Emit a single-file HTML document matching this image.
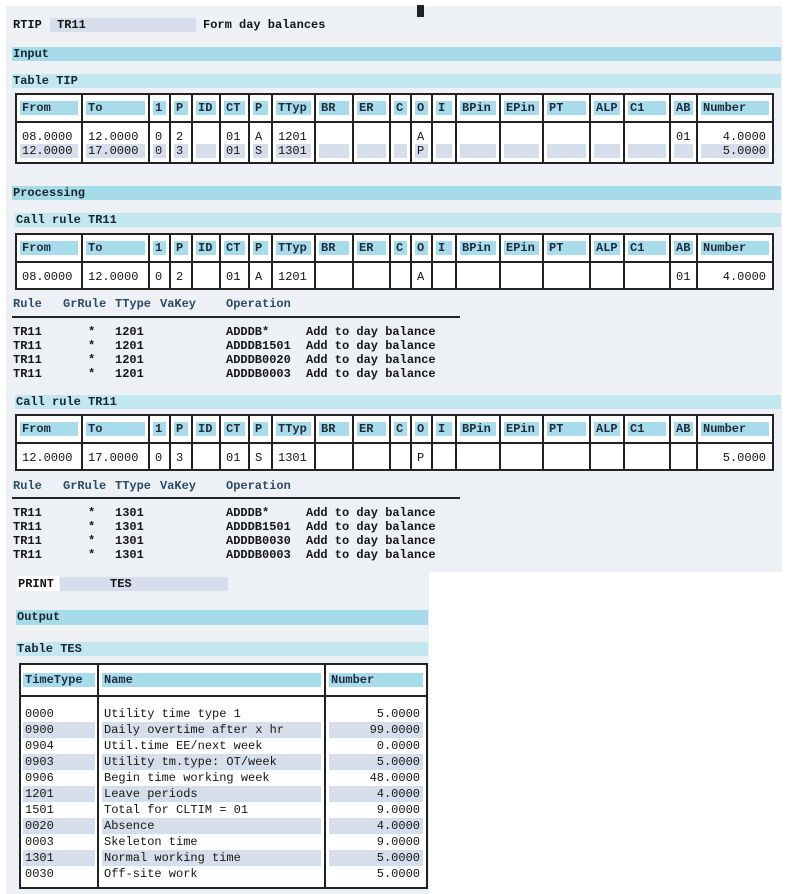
<!DOCTYPE html>
<html><head><meta charset="utf-8">
<style>
*{margin:0;padding:0;box-sizing:border-box}
body{width:788px;height:894px;background:#fff;position:relative;overflow:hidden;font-family:"Liberation Mono",monospace;font-size:12px;color:#151515}
.a{position:absolute;white-space:pre;line-height:14px}
.bar{position:absolute;height:14px;line-height:14px;padding-left:1px;background:#a6dcea;font-weight:bold;color:#1a2430}
.bar2{background:#c2e7ee}
table{position:absolute;border:2px solid #222;border-collapse:collapse;table-layout:fixed;background:#fff}
td{border-left:2px solid #222;padding:0;vertical-align:middle}
tr.hd td{border-bottom:2px solid #222;height:28px}
.c{height:14px;line-height:14px;margin:0 3px;padding-left:2px;white-space:pre;overflow:hidden}
.h{background:#a8dcec;font-weight:bold;color:#1e2c3a}
.r{background:#d6deeb}
.n{text-align:right;padding-right:3px}
.sp td{height:8px}
.sp2 td{height:5px}
.dr td{height:14px}
.rh{color:#2b4a66;font-weight:bold}
.b{font-weight:bold}
.t{height:16px;line-height:16px}
</style></head><body>
<div style="position:absolute;left:6px;top:6px;width:776px;height:566px;background:#edf0f5"></div>
<div style="position:absolute;left:6px;top:572px;width:423px;height:322px;background:#edf0f5"></div>
<div style="position:absolute;left:417px;top:5px;width:7px;height:12px;background:#222"></div>

<div class="a b" style="left:13px;top:18px">RTIP</div>
<div style="position:absolute;left:50px;top:18px;width:146px;height:14px;background:#d6deeb"></div>
<div class="a b" style="left:57px;top:18px">TR11</div>
<div class="a b" style="left:203px;top:18px">Form day balances</div>

<div class="bar" style="left:12px;top:47px;width:769px">Input</div>
<div class="bar bar2" style="left:12px;top:74px;width:769px">Table TIP</div>

<table style="left:15px;top:93px;width:757px">
<colgroup><col style="width:66px"><col style="width:67px"><col style="width:21px"><col style="width:22px"><col style="width:28px"><col style="width:29px"><col style="width:23px"><col style="width:43px"><col style="width:38px"><col style="width:37px"><col style="width:21px"><col style="width:21px"><col style="width:24px"><col style="width:44px"><col style="width:43px"><col style="width:47px"><col style="width:34px"><col style="width:46px"><col style="width:27px"><col style="width:76px"></colgroup>
<tr class="hd"><td><div class="c h">From</div></td><td><div class="c h">To</div></td><td><div class="c h">1</div></td><td><div class="c h">P</div></td><td><div class="c h">ID</div></td><td><div class="c h">CT</div></td><td><div class="c h">P</div></td><td><div class="c h">TTyp</div></td><td><div class="c h">BR</div></td><td><div class="c h">ER</div></td><td><div class="c h">C</div></td><td><div class="c h">O</div></td><td><div class="c h">I</div></td><td><div class="c h">BPin</div></td><td><div class="c h">EPin</div></td><td><div class="c h">PT</div></td><td><div class="c h">ALP</div></td><td><div class="c h">C1</div></td><td><div class="c h">AB</div></td><td><div class="c h">Number</div></td></tr>
<tr class="sp"><td></td><td></td><td></td><td></td><td></td><td></td><td></td><td></td><td></td><td></td><td></td><td></td><td></td><td></td><td></td><td></td><td></td><td></td><td></td><td></td></tr>
<tr class="dr"><td><div class="c">08.0000</div></td><td><div class="c">12.0000</div></td><td><div class="c">0</div></td><td><div class="c">2</div></td><td><div class="c"></div></td><td><div class="c">01</div></td><td><div class="c">A</div></td><td><div class="c">1201</div></td><td></td><td></td><td></td><td><div class="c">A</div></td><td></td><td></td><td></td><td></td><td></td><td></td><td><div class="c">01</div></td><td><div class="c n">4.0000</div></td></tr>
<tr class="dr"><td><div class="c r">12.0000</div></td><td><div class="c r">17.0000</div></td><td><div class="c r">0</div></td><td><div class="c r">3</div></td><td><div class="c r"></div></td><td><div class="c r">01</div></td><td><div class="c r">S</div></td><td><div class="c r">1301</div></td><td><div class="c r"></div></td><td><div class="c r"></div></td><td><div class="c r"></div></td><td><div class="c r">P</div></td><td><div class="c r"></div></td><td><div class="c r"></div></td><td><div class="c r"></div></td><td><div class="c r"></div></td><td><div class="c r"></div></td><td><div class="c r"></div></td><td><div class="c r"></div></td><td><div class="c r n">5.0000</div></td></tr>
<tr class="sp2"><td></td><td></td><td></td><td></td><td></td><td></td><td></td><td></td><td></td><td></td><td></td><td></td><td></td><td></td><td></td><td></td><td></td><td></td><td></td><td></td></tr>
</table>

<div class="bar" style="left:12px;top:186px;width:769px">Processing</div>
<div class="bar bar2" style="left:15px;top:213px;width:766px"> Call rule TR11</div>

<table style="left:15px;top:233px;width:757px">
<colgroup><col style="width:66px"><col style="width:67px"><col style="width:21px"><col style="width:22px"><col style="width:28px"><col style="width:29px"><col style="width:23px"><col style="width:43px"><col style="width:38px"><col style="width:37px"><col style="width:21px"><col style="width:21px"><col style="width:24px"><col style="width:44px"><col style="width:43px"><col style="width:47px"><col style="width:34px"><col style="width:46px"><col style="width:27px"><col style="width:76px"></colgroup>
<tr class="hd"><td><div class="c h">From</div></td><td><div class="c h">To</div></td><td><div class="c h">1</div></td><td><div class="c h">P</div></td><td><div class="c h">ID</div></td><td><div class="c h">CT</div></td><td><div class="c h">P</div></td><td><div class="c h">TTyp</div></td><td><div class="c h">BR</div></td><td><div class="c h">ER</div></td><td><div class="c h">C</div></td><td><div class="c h">O</div></td><td><div class="c h">I</div></td><td><div class="c h">BPin</div></td><td><div class="c h">EPin</div></td><td><div class="c h">PT</div></td><td><div class="c h">ALP</div></td><td><div class="c h">C1</div></td><td><div class="c h">AB</div></td><td><div class="c h">Number</div></td></tr>
<tr class="sp"><td></td><td></td><td></td><td></td><td></td><td></td><td></td><td></td><td></td><td></td><td></td><td></td><td></td><td></td><td></td><td></td><td></td><td></td><td></td><td></td></tr>
<tr class="dr"><td><div class="c">08.0000</div></td><td><div class="c">12.0000</div></td><td><div class="c">0</div></td><td><div class="c">2</div></td><td></td><td><div class="c">01</div></td><td><div class="c">A</div></td><td><div class="c">1201</div></td><td></td><td></td><td></td><td><div class="c">A</div></td><td></td><td></td><td></td><td></td><td></td><td></td><td><div class="c">01</div></td><td><div class="c n">4.0000</div></td></tr>
<tr class="sp2"><td></td><td></td><td></td><td></td><td></td><td></td><td></td><td></td><td></td><td></td><td></td><td></td><td></td><td></td><td></td><td></td><td></td><td></td><td></td><td></td></tr>
</table>

<div class="a rh" style="left:13px;top:297px">Rule</div>
<div class="a rh" style="left:63px;top:297px">GrRule</div>
<div class="a rh" style="left:115px;top:297px">TType</div>
<div class="a rh" style="left:160px;top:297px">VaKey</div>
<div class="a rh" style="left:226px;top:297px">Operation</div>
<div style="position:absolute;left:12px;top:316px;width:448px;height:2px;background:#222"></div>
<div class="a b" style="left:13px;top:325px">TR11
TR11
TR11
TR11</div>
<div class="a b" style="left:88px;top:325px">*
*
*
*</div>
<div class="a b" style="left:115px;top:325px">1201
1201
1201
1201</div>
<div class="a b" style="left:226px;top:325px">ADDDB*
ADDDB1501
ADDDB0020
ADDDB0003</div>
<div class="a b" style="left:306px;top:325px">Add to day balance
Add to day balance
Add to day balance
Add to day balance</div>

<div class="bar bar2" style="left:15px;top:395px;width:766px"> Call rule TR11</div>

<table style="left:15px;top:414px;width:757px">
<colgroup><col style="width:66px"><col style="width:67px"><col style="width:21px"><col style="width:22px"><col style="width:28px"><col style="width:29px"><col style="width:23px"><col style="width:43px"><col style="width:38px"><col style="width:37px"><col style="width:21px"><col style="width:21px"><col style="width:24px"><col style="width:44px"><col style="width:43px"><col style="width:47px"><col style="width:34px"><col style="width:46px"><col style="width:27px"><col style="width:76px"></colgroup>
<tr class="hd"><td><div class="c h">From</div></td><td><div class="c h">To</div></td><td><div class="c h">1</div></td><td><div class="c h">P</div></td><td><div class="c h">ID</div></td><td><div class="c h">CT</div></td><td><div class="c h">P</div></td><td><div class="c h">TTyp</div></td><td><div class="c h">BR</div></td><td><div class="c h">ER</div></td><td><div class="c h">C</div></td><td><div class="c h">O</div></td><td><div class="c h">I</div></td><td><div class="c h">BPin</div></td><td><div class="c h">EPin</div></td><td><div class="c h">PT</div></td><td><div class="c h">ALP</div></td><td><div class="c h">C1</div></td><td><div class="c h">AB</div></td><td><div class="c h">Number</div></td></tr>
<tr class="sp"><td></td><td></td><td></td><td></td><td></td><td></td><td></td><td></td><td></td><td></td><td></td><td></td><td></td><td></td><td></td><td></td><td></td><td></td><td></td><td></td></tr>
<tr class="dr"><td><div class="c">12.0000</div></td><td><div class="c">17.0000</div></td><td><div class="c">0</div></td><td><div class="c">3</div></td><td></td><td><div class="c">01</div></td><td><div class="c">S</div></td><td><div class="c">1301</div></td><td></td><td></td><td></td><td><div class="c">P</div></td><td></td><td></td><td></td><td></td><td></td><td></td><td></td><td><div class="c n">5.0000</div></td></tr>
<tr class="sp2"><td></td><td></td><td></td><td></td><td></td><td></td><td></td><td></td><td></td><td></td><td></td><td></td><td></td><td></td><td></td><td></td><td></td><td></td><td></td><td></td></tr>
</table>

<div class="a rh" style="left:13px;top:479px">Rule</div>
<div class="a rh" style="left:63px;top:479px">GrRule</div>
<div class="a rh" style="left:115px;top:479px">TType</div>
<div class="a rh" style="left:160px;top:479px">VaKey</div>
<div class="a rh" style="left:226px;top:479px">Operation</div>
<div style="position:absolute;left:12px;top:497px;width:448px;height:2px;background:#222"></div>
<div class="a b" style="left:13px;top:506px">TR11
TR11
TR11
TR11</div>
<div class="a b" style="left:88px;top:506px">*
*
*
*</div>
<div class="a b" style="left:115px;top:506px">1301
1301
1301
1301</div>
<div class="a b" style="left:226px;top:506px">ADDDB*
ADDDB1501
ADDDB0030
ADDDB0003</div>
<div class="a b" style="left:306px;top:506px">Add to day balance
Add to day balance
Add to day balance
Add to day balance</div>

<div style="position:absolute;left:17px;top:576px;width:42px;height:15px;background:#fff"></div>
<div class="a b" style="left:18px;top:577px">PRINT</div>
<div style="position:absolute;left:60px;top:577px;width:168px;height:14px;background:#d6deeb"></div>
<div class="a b" style="left:110px;top:577px">TES</div>

<div class="bar" style="left:16px;top:610px;width:412px;height:15px">Output</div>
<div class="bar bar2" style="left:16px;top:642px;width:412px;height:14px">Table TES</div>

<table style="left:19px;top:663px;width:407px;height:226px">
<colgroup><col style="width:78px"><col style="width:227px"><col style="width:102px"></colgroup>
<tr class="hd"><td style="height:32px"><div class="c h" style="margin:0 2px">TimeType</div></td><td><div class="c h">Name</div></td><td><div class="c h">Number</div></td></tr>
<tr class="sp"><td style="height:10px"></td><td></td><td></td></tr>
<tr class="dr"><td style="height:16px"><div class="c t" style="margin:0 2px">0000</div></td><td><div class="c t">Utility time type 1</div></td><td><div class="c n t">5.0000</div></td></tr>
<tr class="dr"><td style="height:16px"><div class="c r t" style="margin:0 2px">0900</div></td><td><div class="c r t">Daily overtime after x hr</div></td><td><div class="c r n t">99.0000</div></td></tr>
<tr class="dr"><td style="height:16px"><div class="c t" style="margin:0 2px">0904</div></td><td><div class="c t">Util.time EE/next week</div></td><td><div class="c n t">0.0000</div></td></tr>
<tr class="dr"><td style="height:16px"><div class="c r t" style="margin:0 2px">0903</div></td><td><div class="c r t">Utility tm.type: OT/week</div></td><td><div class="c r n t">5.0000</div></td></tr>
<tr class="dr"><td style="height:16px"><div class="c t" style="margin:0 2px">0906</div></td><td><div class="c t">Begin time working week</div></td><td><div class="c n t">48.0000</div></td></tr>
<tr class="dr"><td style="height:16px"><div class="c r t" style="margin:0 2px">1201</div></td><td><div class="c r t">Leave periods</div></td><td><div class="c r n t">4.0000</div></td></tr>
<tr class="dr"><td style="height:16px"><div class="c t" style="margin:0 2px">1501</div></td><td><div class="c t">Total for CLTIM = 01</div></td><td><div class="c n t">9.0000</div></td></tr>
<tr class="dr"><td style="height:16px"><div class="c r t" style="margin:0 2px">0020</div></td><td><div class="c r t">Absence</div></td><td><div class="c r n t">4.0000</div></td></tr>
<tr class="dr"><td style="height:16px"><div class="c t" style="margin:0 2px">0003</div></td><td><div class="c t">Skeleton time</div></td><td><div class="c n t">9.0000</div></td></tr>
<tr class="dr"><td style="height:16px"><div class="c r t" style="margin:0 2px">1301</div></td><td><div class="c r t">Normal working time</div></td><td><div class="c r n t">5.0000</div></td></tr>
<tr class="dr"><td style="height:16px"><div class="c t" style="margin:0 2px">0030</div></td><td><div class="c t">Off-site work</div></td><td><div class="c n t">5.0000</div></td></tr>
<tr><td></td><td></td><td></td></tr>
</table>
</body></html>
